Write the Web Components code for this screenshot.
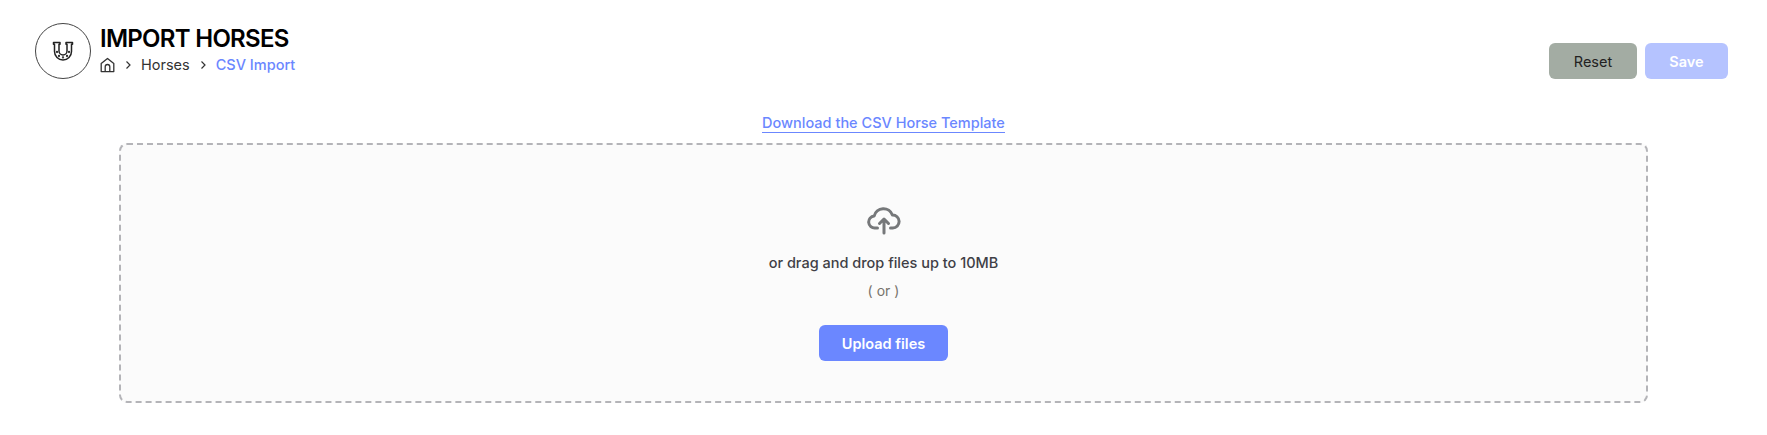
<!DOCTYPE html>
<html lang="en"><head><meta charset="utf-8"><title>Import Horses</title>
<style>
html,body{margin:0;background:#fff;font-family:Inter,"Liberation Sans",sans-serif;}
</style></head><body>
<import-page></import-page>
<script>
class PageHeader extends HTMLElement{constructor(){super();this.attachShadow({mode:'open'}).innerHTML=`<style>
:host{display:flex;justify-content:space-between;align-items:flex-end;padding:23px 39px 0 35px;height:56px}
.left{display:flex;gap:9px;align-items:center}
.circle{width:56px;height:56px;box-sizing:border-box;border:1px solid #444;border-radius:50%;display:flex;align-items:center;justify-content:center}
.text{display:flex;flex-direction:column;gap:2px;margin-top:-2px}
h1{margin:0;font-size:24px;line-height:28px;font-weight:600;color:#000;letter-spacing:-.72px}
.actions{display:flex;gap:8px}
</style><div class="left"><div class="circle"><svg width="22" height="20" viewBox="0 0 22 20" fill="none" stroke="#222" stroke-width="1.5" stroke-linejoin="round" stroke-linecap="round"><path d="M1.5 1.500h6.500v1.800h-1V10a4 4 0 0 0 8 0V3.300h-1V1.500h6.500v1.800h-1V10.500a8.500 8.500 0 0 1-17 0V3.300h-1z"/><circle cx="5" cy="11" r=".4"/><circle cx="7" cy="15" r=".4"/><circle cx="11" cy="16.400" r=".4"/><circle cx="15" cy="15" r=".4"/><circle cx="17" cy="11" r=".4"/></svg></div>
<div class="text"><h1>IMPORT HORSES</h1><slot name="crumbs"></slot></div></div><div class="actions"><slot></slot></div>`}}
class BreadCrumbs extends HTMLElement{constructor(){super();this.attachShadow({mode:'open'}).innerHTML=`<style>
:host{display:flex;align-items:center;font-size:14.5px;line-height:20px;color:#333}
svg{display:block}.home{margin-right:9px}.sep{margin-right:8px}.h{margin-right:9px}
.c{color:#6b87ff;font-weight:500}
</style><svg class="home" width="15" height="16" viewBox="0 0 15 16" fill="none" stroke="#333" stroke-width="1.3" stroke-linejoin="round"><path d="M1.2 6.6 7.5 1.4l6.3 5.2v8H1.2z"/><path d="M5.2 14.6V9.8a2.3 2.3 0 0 1 4.6 0v4.8"/></svg>
<svg class="sep" width="9" height="10" viewBox="0 0 9 10" fill="none" stroke="#333" stroke-width="1.2"><path d="M2.5 1.5 6 5 2.5 8.5"/></svg><span class="h">Horses</span>
<svg class="sep" width="9" height="10" viewBox="0 0 9 10" fill="none" stroke="#333" stroke-width="1.2"><path d="M2.5 1.5 6 5 2.5 8.5"/></svg><span class="c">CSV Import</span>`}}
class UiButton extends HTMLElement{constructor(){super();this.attachShadow({mode:'open'}).innerHTML=`<style>
:host{display:inline-flex;align-items:center;justify-content:center;height:36px;box-sizing:border-box;border-radius:6px;font-size:14.5px;font-weight:500;background:#6b87ff;color:#fff;width:var(--w,auto)}
:host([kind=reset]){background:#a3aca3;color:#222;font-weight:400}
:host([kind=save]){background:#b5c3ff;color:#fff;font-weight:600}
:host([kind=upload]){font-weight:600}
</style><slot></slot>`}}
class DropZone extends HTMLElement{constructor(){super();this.attachShadow({mode:'open'}).innerHTML=`<style>
:host{display:flex;flex-direction:column;align-items:center;width:1529px;height:260px;box-sizing:border-box;border:2px dashed #b4b4b8;border-radius:8px;background:#fbfbfb;padding-top:62px}
svg{display:block}
.t{margin-top:18px;font-size:14.5px;line-height:20px;font-weight:500;color:#3f3f46}
.o{margin-top:8px;font-size:14px;line-height:20px;color:#77736c;margin-bottom:24px}
</style><svg width="34" height="28" viewBox="0 0 34 28" fill="none" stroke="#76787a" stroke-width="3" stroke-linecap="round" stroke-linejoin="round"><path d="M10.5 21H8.2a6 6 0 0 1-1-12A9.5 9.5 0 0 1 25.4 8a6.4 6.4 0 0 1 .4 13H23.5"/><path d="M17 26V13M12.5 16.5 17 12l4.500 4.500"/></svg>
<div class="t">or drag and drop files up to 10MB</div><div class="o">( or )</div><slot></slot>`}}
class ImportPage extends HTMLElement{constructor(){super();this.attachShadow({mode:'open'}).innerHTML=`<style>
:host{display:block;height:435px;overflow:hidden;color:#333}
main{display:flex;flex-direction:column;align-items:center;padding-top:34px}
a{font-size:14.500px;line-height:19px;font-weight:500;color:#6b87ff;text-decoration:none;border-bottom:1px solid #6b87ff;margin-bottom:10px;display:block}
</style><page-header><bread-crumbs slot="crumbs"></bread-crumbs><ui-button kind="reset" style="--w:88px">Reset</ui-button><ui-button kind="save" style="--w:83px">Save</ui-button></page-header>
<main><a href="#">Download the CSV Horse Template</a><drop-zone><ui-button kind="upload" style="--w:129px">Upload files</ui-button></drop-zone></main>`}}
customElements.define('page-header',PageHeader);customElements.define('bread-crumbs',BreadCrumbs);customElements.define('ui-button',UiButton);customElements.define('drop-zone',DropZone);customElements.define('import-page',ImportPage);
</script></body></html>
